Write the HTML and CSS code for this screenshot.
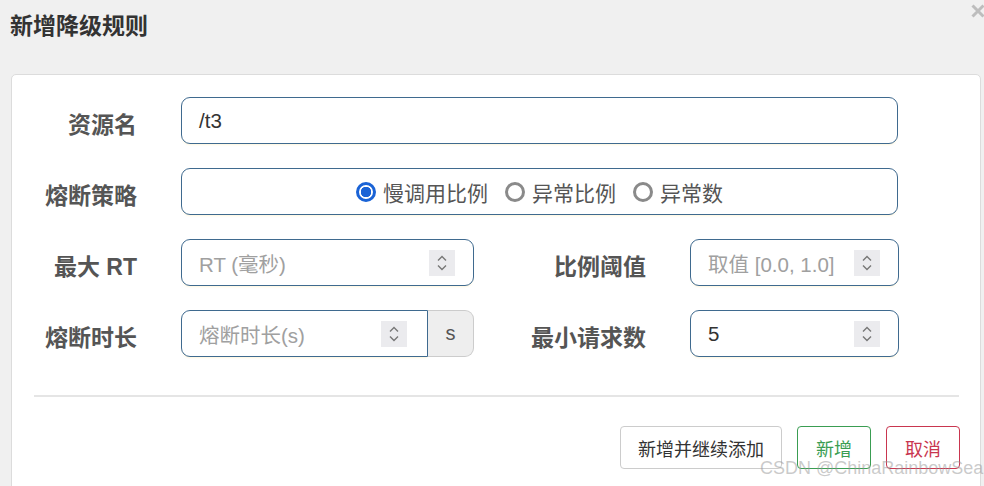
FILE: index.html
```html
<!DOCTYPE html>
<html lang="zh">
<head>
<meta charset="utf-8">
<title>新增降级规则</title>
<link rel="stylesheet" href="styles.css">
</head>
<body>
<div class="dialog">
  <div class="header">
    <h3 class="title">新增降级规则</h3>
    <span class="close" aria-label="关闭"><svg viewBox="0 0 14 14" width="14" height="14"><path d="M1.5 1.5l11 11M12.5 1.5l-11 11" stroke="#bdbdbd" stroke-width="3" fill="none"/></svg></span>
  </div>
  <div class="panel">
    <div class="row">
      <label class="label">资源名</label>
      <div class="field wide"><span class="value">/t3</span></div>
    </div>
    <div class="row">
      <label class="label">熔断策略</label>
      <div class="field wide radios">
        <span class="radio on"></span><span class="rtext">慢调用比例</span>
        <span class="radio"></span><span class="rtext">异常比例</span>
        <span class="radio"></span><span class="rtext">异常数</span>
      </div>
    </div>
    <div class="row">
      <label class="label">最大 RT</label>
      <div class="field half"><span class="ph">RT (毫秒)</span><span class="spin"><svg viewBox="0 0 26 26" width="26" height="26"><path d="M9 10.5l4-4 4 4M9 15.5l4 4 4-4" fill="none" stroke="#777" stroke-width="1.4"/></svg></span></div>
      <label class="label label2">比例阈值</label>
      <div class="field small"><span class="ph">取值 [0.0, 1.0]</span><span class="spin"><svg viewBox="0 0 26 26" width="26" height="26"><path d="M9 10.5l4-4 4 4M9 15.5l4 4 4-4" fill="none" stroke="#777" stroke-width="1.4"/></svg></span></div>
    </div>
    <div class="row last">
      <label class="label">熔断时长</label>
      <div class="group">
        <div class="field grouped"><span class="ph">熔断时长(s)</span><span class="spin"><svg viewBox="0 0 26 26" width="26" height="26"><path d="M9 10.5l4-4 4 4M9 15.5l4 4 4-4" fill="none" stroke="#777" stroke-width="1.4"/></svg></span></div>
        <div class="addon">s</div>
      </div>
      <label class="label label2">最小请求数</label>
      <div class="field small"><span class="value">5</span><span class="spin"><svg viewBox="0 0 26 26" width="26" height="26"><path d="M9 10.5l4-4 4 4M9 15.5l4 4 4-4" fill="none" stroke="#777" stroke-width="1.4"/></svg></span></div>
    </div>
    <div class="divider"></div>
    <div class="footer">
      <button class="btn">新增并继续添加</button>
      <button class="btn green">新增</button>
      <button class="btn red">取消</button>
    </div>
  </div>
</div>
<div class="watermark">CSDN @ChinaRainbowSea</div>
</body>
</html>
```
FILE: styles.css
```css
html, body {
  margin: 0;
  padding: 0;
  background: #f0f0f0;
  width: 984px;
  height: 486px;
  overflow: hidden;
  font-family: "Liberation Sans", Arial, "Noto Sans CJK SC", sans-serif;
}
.dialog {
  position: relative;
  padding: 0 0 0 11px;
}
.header {
  height: 74px;
  position: relative;
}
.title {
  margin: 0;
  padding-top: 11px;
  font-size: 23px;
  font-weight: bold;
  color: #333;
  line-height: 30px;
  margin-left: -1px;
}
.close {
  position: absolute;
  right: -1px;
  top: 4px;
  width: 14px;
  height: 14px;
}
.close svg { display: block; }
.panel {
  width: 970px;
  height: 430px;
  background: #fff;
  border: 1px solid #dcdcdc;
  border-radius: 5px;
  box-sizing: border-box;
  padding-top: 22px;
}
.row {
  display: flex;
  align-items: center;
  height: 47px;
  margin-bottom: 24px;
}
.row.last { margin-bottom: 0; }
.label {
  width: 125px;
  flex: none;
  text-align: right;
  font-size: 23px;
  font-weight: bold;
  color: #555;
  margin-right: 44px;
  padding-top: 4px;
}
.label2 {
  width: 172px;
  margin-right: 44px;
}
.field {
  height: 47px;
  box-sizing: border-box;
  border: 1px solid #3f6a8f;
  border-radius: 9px;
  display: flex;
  align-items: center;
  padding: 0 17px;
  font-size: 20.5px;
  color: #333;
  background: #fff;
  box-shadow: 0 2px 2px -1px rgba(255, 240, 200, 0.6);
}
.wide { width: 717px; }
.half { width: 293px; justify-content: space-between; padding-right: 18px; }
.small { width: 209px; justify-content: space-between; padding-right: 18px; }
.value { color: #333; }
.ph { color: #a0a0a0; }
.spin {
  width: 26px;
  height: 26px;
  background: #ebebee;
  display: block;
}
.spin svg { display: block; }
.group { display: flex; width: 293px; }
.grouped {
  width: 247px;
  border-radius: 9px 0 0 9px;
  justify-content: space-between;
  padding-right: 20px;
}
.addon {
  width: 46px;
  height: 47px;
  box-sizing: border-box;
  border: 1px solid #ccc;
  border-left: none;
  border-radius: 0 9px 9px 0;
  background: #eee;
  display: flex;
  align-items: center;
  justify-content: center;
  font-size: 20px;
  color: #555;
}
.radios {
  justify-content: center;
  padding: 0;
  color: #555;
  font-size: 21px;
}
.radio {
  width: 14px;
  height: 14px;
  border-radius: 50%;
  border: 3px solid #8a8a8a;
  margin-right: 7px;
  flex: none;
  box-sizing: content-box;
}
.radio.on {
  border: 3px solid #1a63d6;
  background: radial-gradient(circle, #1a63d6 0 5px, #fff 5.5px);
}
.rtext { margin-right: 17px; }
.rtext:last-child { margin-right: 0; }
.divider {
  margin: 38px 21px 0 22px;
  height: 2px;
  background: #e5e5e5;
}
.footer {
  display: flex;
  justify-content: flex-end;
  padding-top: 29px;
  padding-right: 20px;
  gap: 15px;
}
.btn {
  height: 43px;
  padding: 0 17px;
  border: 1px solid #ccc;
  border-radius: 4px;
  background: #fff;
  font-family: "Liberation Sans", Arial, "Noto Sans CJK SC", sans-serif;
  font-size: 18px;
  color: #333;
}
.btn.green { border-color: #3a9d52; color: #3a9d52; width: 74px; padding: 0; }
.btn.red { border-color: #c9364f; color: #c9364f; width: 74px; padding: 0; }
.watermark {
  position: absolute;
  left: 760px;
  top: 458px;
  font-size: 18px;
  color: rgba(150, 150, 150, 0.5);
  white-space: nowrap;
}
```
